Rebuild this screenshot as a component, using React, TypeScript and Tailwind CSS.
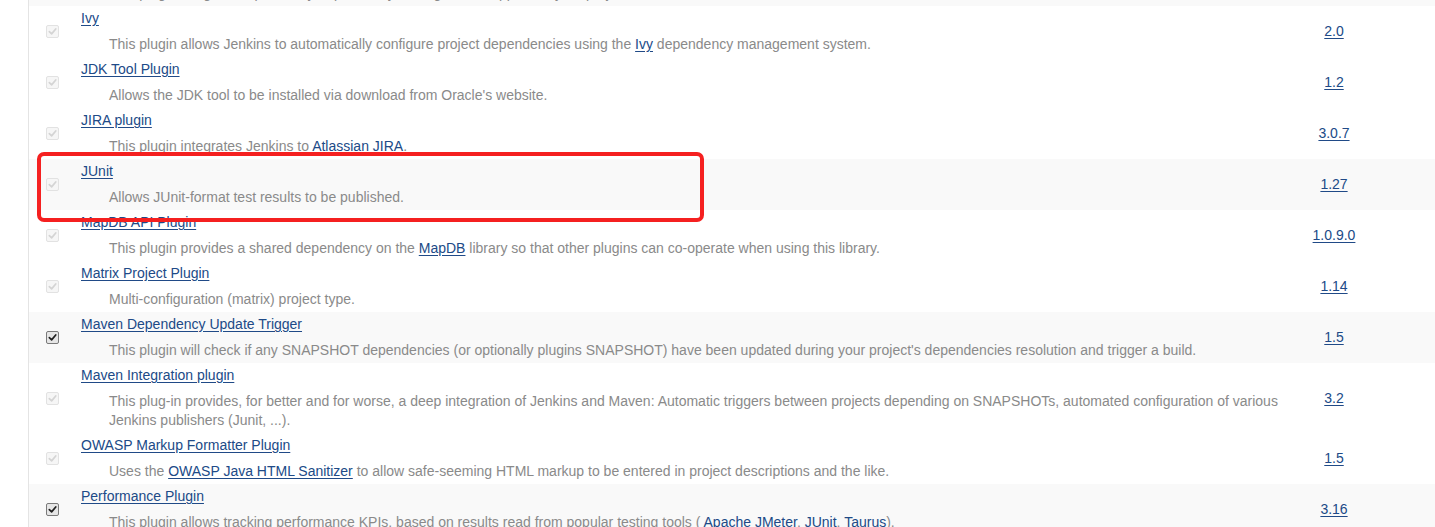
import React from "react";

type Plugin = {
  name: string;
  desc: React.ReactNode;
  version: string;
  enabled?: boolean;
  striped?: boolean;
  tall?: boolean;
};

function L({ children }: { children: React.ReactNode }) {
  return <a className="text-[#204a87] underline underline-offset-2">{children}</a>;
}

const plugins: Plugin[] = [
  {
    name: "Ivy",
    desc: (
      <>
        This plugin allows Jenkins to automatically configure project dependencies using the <L>Ivy</L> dependency
        management system.
      </>
    ),
    version: "2.0",
  },
  { name: "JDK Tool Plugin", desc: "Allows the JDK tool to be installed via download from Oracle's website.", version: "1.2" },
  {
    name: "JIRA plugin",
    desc: (
      <>
        This plugin integrates Jenkins to <L>Atlassian JIRA</L>.
      </>
    ),
    version: "3.0.7",
  },
  { name: "JUnit", desc: "Allows JUnit-format test results to be published.", version: "1.27", striped: true },
  {
    name: "MapDB API Plugin",
    desc: (
      <>
        This plugin provides a shared dependency on the <L>MapDB</L> library so that other plugins can co-operate when
        using this library.
      </>
    ),
    version: "1.0.9.0",
  },
  { name: "Matrix Project Plugin", desc: "Multi-configuration (matrix) project type.", version: "1.14" },
  {
    name: "Maven Dependency Update Trigger",
    desc: "This plugin will check if any SNAPSHOT dependencies (or optionally plugins SNAPSHOT) have been updated during your project's dependencies resolution and trigger a build.",
    version: "1.5",
    enabled: true,
    striped: true,
  },
  {
    name: "Maven Integration plugin",
    desc: (
      <>
        This plug-in provides, for better and for worse, a deep integration of Jenkins and Maven: Automatic triggers
        between projects depending on SNAPSHOTs, automated configuration of various
        <br />
        Jenkins publishers (Junit, ...).
      </>
    ),
    version: "3.2",
    tall: true,
  },
  {
    name: "OWASP Markup Formatter Plugin",
    desc: (
      <>
        Uses the <L>OWASP Java HTML Sanitizer</L> to allow safe-seeming HTML markup to be entered in project
        descriptions and the like.
      </>
    ),
    version: "1.5",
  },
  {
    name: "Performance Plugin",
    desc: (
      <>
        This plugin allows tracking performance KPIs, based on results read from popular testing tools ({" "}
        <L>Apache JMeter</L>, <L>JUnit</L>, <L>Taurus</L>).
      </>
    ),
    version: "3.16",
    enabled: true,
    striped: true,
  },
];

function Check({ enabled }: { enabled?: boolean }) {
  return (
    <span
      className={
        "flex h-[13px] w-[13px] items-center justify-center rounded-[2px] border " +
        (enabled ? "border-[#7a7a7a] bg-[#e6e6e6]" : "border-[#e2e2e2] bg-[#f6f6f6]")
      }
    >
      <svg width="9" height="9" viewBox="0 0 10 10">
        <path
          d="M1.5 5.2 L4 7.6 L8.6 2.2"
          fill="none"
          stroke={enabled ? "#1f1f1f" : "#d4d4d4"}
          strokeWidth="1.9"
          strokeLinecap="round"
          strokeLinejoin="round"
        />
      </svg>
    </span>
  );
}

export default function App() {
  return (
    <div
      className="relative h-[527px] w-[1435px] overflow-hidden bg-white text-[14px] leading-[19px]"
      style={{ fontFamily: '"Liberation Sans", Arial, sans-serif' }}
    >
      <div className="ml-[28px] flex h-full flex-col border-l border-[#e4e4e4]">
        {/* previous row, scrolled almost out of view */}
        <div className="h-[6px] shrink-0 overflow-hidden bg-[#f9f9f9]">
          <div className="-mt-[16px] pl-[80px] text-[#8a8a8a]">
            This plugin integrates Apache Ivy dependency management support for your project builds.
          </div>
        </div>

        {plugins.map((p) => (
          <div
            key={p.name}
            className={
              "flex shrink-0 items-center " +
              (p.striped ? "bg-[#f9f9f9] " : "bg-white ") +
              (p.tall ? "h-[70px]" : "h-[51px]")
            }
          >
            <div className="flex w-[46px] shrink-0 justify-center">
              <Check enabled={p.enabled} />
            </div>
            <div className="flex w-[1210px] shrink-0 flex-col self-start pt-[3px] pl-[6px]">
              <div>
                <L>{p.name}</L>
              </div>
              <div className="mt-[7px] pl-[28px] text-[#8a8a8a]">{p.desc}</div>
            </div>
            <div className="flex w-[98px] shrink-0 justify-center">
              <L>{p.version}</L>
            </div>
          </div>
        ))}
      </div>

      <div className="pointer-events-none absolute left-[37px] top-[152px] h-[70px] w-[667px] rounded-[7px] border-[4px] border-[#f52020]" />
    </div>
  );
}
